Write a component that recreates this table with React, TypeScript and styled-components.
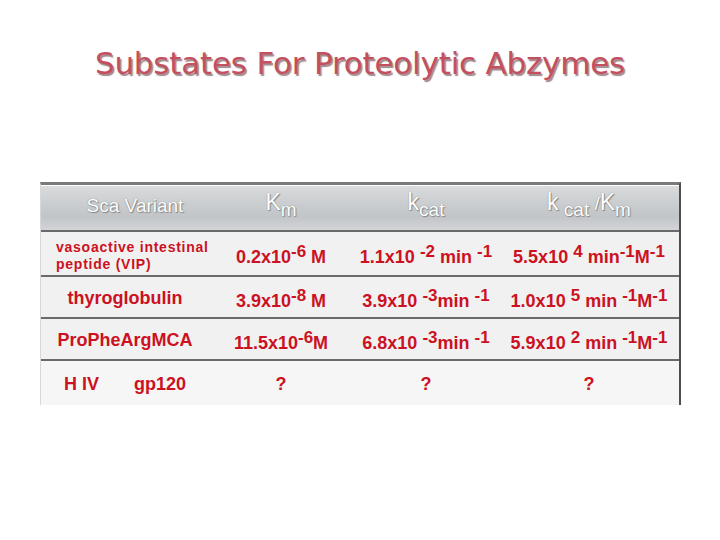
import React from "react";
import styled, { createGlobalStyle } from "styled-components";

const Global = createGlobalStyle`
  html, body { margin: 0; padding: 0; background: #ffffff; }
  body { width: 720px; height: 540px; overflow: hidden; font-family: "Liberation Sans", Arial, sans-serif; }
`;

const Page = styled.div`
  width: 720px;
  height: 540px;
  display: flex;
  flex-direction: column;
  align-items: flex-start;
`;

const Title = styled.h1`
  margin: 0;
  width: 720px;
  padding-top: 45px;
  height: 182px;
  box-sizing: border-box;
  text-align: center;
  font-family: "DejaVu Sans", sans-serif;
  font-weight: normal;
  font-size: 31px;
  letter-spacing: -0.2px;
  color: #c4505f;
  text-shadow: 1.5px 1.5px 1px rgba(80, 40, 45, 0.55);
`;

const Table = styled.div`
  margin-left: 40px;
  width: 641px;
  box-sizing: border-box;
  border-top: 3px solid #7a7a7a;
  border-right: 3px solid #4e4e4e;
  border-left: 1px solid #d8d8d8;
  display: grid;
  grid-template-columns: 168px 144px 146px 180px;
`;

const HeadCell = styled.div<{ $pad?: number }>`
  height: 47px;
  box-sizing: border-box;
  border-top: 1px solid #ffffff;
  border-bottom: 2px solid #6a6a6a;
  background: linear-gradient(to bottom, #d9dbdd 0%, #c9ccce 45%, #c2c5c8 70%, #d3d5d8 100%);
  display: flex;
  align-items: center;
  justify-content: center;
  padding-left: ${(p) => p.$pad ?? 0}px;
  padding-bottom: 4px;
  color: #ffffff;
  font-size: 19px;
  text-shadow: 0 0 1px #6f6f6f, 1px 1px 1px #8a8a8a;
  white-space: pre;
`;

const HeadText = styled.span`
  line-height: 24px;
`;

const HeadBig = styled.span`
  font-size: 23px;
`;

const HeadSub = styled.span`
  font-size: 19px;
  vertical-align: -6px;
`;

const Cell = styled.div<{ $h: number; $last?: boolean; $pad?: number; $left?: boolean }>`
  height: ${(p) => p.$h}px;
  box-sizing: border-box;
  background: ${(p) => (p.$last ? "#f6f6f6" : "#f1f1f1")};
  border-bottom: ${(p) => (p.$last ? "none" : "2px solid #6a6a6a")};
  display: flex;
  align-items: center;
  justify-content: ${(p) => (p.$left ? "flex-start" : "center")};
  padding-left: ${(p) => p.$pad ?? 0}px;
  color: #cc1122;
  font-weight: bold;
  font-size: 18px;
  white-space: pre;
  overflow: visible;
`;

const Value = styled.span`
  line-height: 22px;
  padding-top: 2px;
`;

const Small = styled.div`
  position: relative;
  z-index: 1;
  font-size: 14px;
  line-height: 17px;
  letter-spacing: 0.75px;
  white-space: nowrap;
  padding-left: 15px;
  padding-top: 4px;
`;

const Sup = styled.span`
  font-size: 17px;
  vertical-align: 6px;
`;

type Row = {
  h: number;
  name: React.ReactNode;
  km: React.ReactNode;
  kcat: React.ReactNode;
  ratio: React.ReactNode;
  namePad?: number;
  left?: boolean;
};

const rows: Row[] = [
  {
    h: 45,
    left: true,
    name: (
      <Small>
        vasoactive intestinal
        <br />
        peptide (VIP)
      </Small>
    ),
    km: (
      <Value>
        0.2x10<Sup>-6</Sup> M
      </Value>
    ),
    kcat: (
      <Value>
        1.1x10 <Sup>-2</Sup>
        {" min "}
        <Sup>-1</Sup>
      </Value>
    ),
    ratio: (
      <Value>
        5.5x10 <Sup>4</Sup>
        {" min"}
        <Sup>-1</Sup>M<Sup>-1</Sup>
      </Value>
    ),
  },
  {
    h: 42,
    name: <Value>thyroglobulin</Value>,
    km: (
      <Value>
        3.9x10<Sup>-8</Sup> M
      </Value>
    ),
    kcat: (
      <Value>
        3.9x10 <Sup>-3</Sup>
        {"min "}
        <Sup>-1</Sup>
      </Value>
    ),
    ratio: (
      <Value>
        1.0x10 <Sup>5</Sup>
        {" min "}
        <Sup>-1</Sup>M<Sup>-1</Sup>
      </Value>
    ),
  },
  {
    h: 42,
    name: <Value>ProPheArgMCA</Value>,
    km: (
      <Value>
        11.5x10<Sup>-6</Sup>M
      </Value>
    ),
    kcat: (
      <Value>
        6.8x10 <Sup>-3</Sup>
        {"min "}
        <Sup>-1</Sup>
      </Value>
    ),
    ratio: (
      <Value>
        5.9x10 <Sup>2</Sup>
        {" min "}
        <Sup>-1</Sup>M<Sup>-1</Sup>
      </Value>
    ),
  },
  {
    h: 44,
    left: true,
    namePad: 23,
    name: <Value>H IV       gp120</Value>,
    km: <Value>?</Value>,
    kcat: <Value>?</Value>,
    ratio: <Value>?</Value>,
  },
];

export default function App() {
  return (
    <>
      <Global />
      <Page>
        <Title>Substates For Proteolytic Abzymes</Title>
        <Table>
          <HeadCell $pad={20}>
            <HeadText>Sca Variant</HeadText>
          </HeadCell>
          <HeadCell>
            <HeadText>
              <HeadBig>K</HeadBig>
              <HeadSub>m</HeadSub>
            </HeadText>
          </HeadCell>
          <HeadCell>
            <HeadText>
              <HeadBig>k</HeadBig>
              <HeadSub>cat</HeadSub>
            </HeadText>
          </HeadCell>
          <HeadCell>
            <HeadText>
              <HeadBig>k</HeadBig>
              <HeadSub> cat </HeadSub>/<HeadBig>K</HeadBig>
              <HeadSub>m</HeadSub>
            </HeadText>
          </HeadCell>
          {rows.map((r, i) => {
            const last = i === rows.length - 1;
            return (
              <React.Fragment key={i}>
                <Cell $h={r.h} $last={last} $left={r.left} $pad={r.namePad}>
                  {r.name}
                </Cell>
                <Cell $h={r.h} $last={last}>
                  {r.km}
                </Cell>
                <Cell $h={r.h} $last={last}>
                  {r.kcat}
                </Cell>
                <Cell $h={r.h} $last={last}>
                  {r.ratio}
                </Cell>
              </React.Fragment>
            );
          })}
        </Table>
      </Page>
    </>
  );
}
